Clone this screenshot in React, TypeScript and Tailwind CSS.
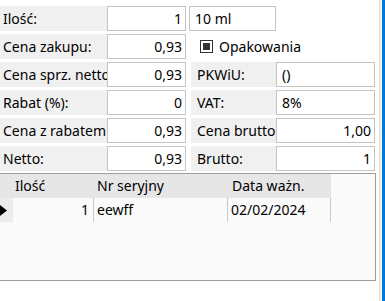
export default function App() {
  const rows = [
    { l: "Rabat (%):", v: "0", rl: "VAT:", rv: "8%", rvLeft: true },
    { l: "Cena z rabatem", v: "0,93", rl: "Cena brutto", rv: "1,00" },
    { l: "Netto:", v: "0,93", rl: "Brutto:", rv: "1" },
  ];

  return (
    <div className="flex w-[385px] h-[301px] bg-white overflow-hidden font-['Noto_Sans',sans-serif] text-[14px] text-black leading-none">
      <div className="w-[379px] flex flex-col">
        {/* Form */}
        <div className="flex flex-col gap-[3px] pt-[6px]">
          <div className="flex h-[25px]">
            <Label text="Ilość:" />
            <Field value="1" className="w-[79px]" />
            <Field value="10 ml" left className="w-[87px] ml-[3px]" />
          </div>
          <div className="flex h-[25px]">
            <Label text="Cena zakupu:" />
            <Field value="0,93" className="w-[79px]" />
            <div className="flex items-center ml-[14px] gap-[6px]">
              <div className="w-[13px] h-[13px] border border-[#333] bg-white flex items-center justify-center">
                <div className="w-[7px] h-[7px] bg-[#333]" />
              </div>
              <span>Opakowania</span>
            </div>
          </div>
          <div className="flex h-[25px]">
            <Label text="Cena sprz. netto" />
            <Field value="0,93" className="w-[79px]" />
            <RightLabel text="PKWiU:" />
            <Field value="()" left className="w-[99px]" />
          </div>
          {rows.map((r) => (
            <div key={r.l} className="flex h-[25px]">
              <Label text={r.l} />
              <Field value={r.v} className="w-[79px]" />
              <RightLabel text={r.rl} />
              <Field value={r.rv} left={r.rvLeft} className="w-[99px]" />
            </div>
          ))}
        </div>

        {/* Grid */}
        <div className="mt-[2px] w-[376px] h-[108px] border-t border-b border-r border-[#9d9d9d] bg-[#fafafa] flex flex-col">
          <div className="flex h-[24px] w-[331px] bg-[#e6e6e6] items-center">
            <div className="w-[13px]" />
            <div className="w-[81px] pl-[2px]">Ilość</div>
            <div className="w-[134px] pl-[3px]">Nr seryjny</div>
            <div className="w-[103px] pl-[4px]">Data ważn.</div>
          </div>
          <div className="flex h-[24px] w-[331px] items-center">
            <div className="w-[13px] h-full bg-[#ececec] flex items-center">
              <svg width="7" height="11" viewBox="0 0 7 11">
                <path d="M0 0 L7 5.5 L0 11 Z" fill="#000" />
              </svg>
            </div>
            <div className="w-[81px] h-full flex items-center justify-end pr-[4px] border-r border-[#c8c8c8]">1</div>
            <div className="w-[134px] h-full flex items-center pl-[3px] border-r border-[#c8c8c8]">eewff</div>
            <div className="w-[103px] h-full flex items-center pl-[3px] border-r border-[#c8c8c8]">02/02/2024</div>
          </div>
        </div>
      </div>
      <div className="w-[2px] h-full bg-[#e3e3e3]" />
      <div className="w-[1px] h-full bg-white" />
      <div className="w-[3px] h-full bg-[#0078d7]" />
    </div>
  );
}

function Label({ text }: { text: string }) {
  return (
    <div className="w-[107px] h-full bg-[#f0f0f0] flex items-center pl-[3px] overflow-hidden whitespace-nowrap">
      {text}
    </div>
  );
}

function RightLabel({ text }: { text: string }) {
  return (
    <div className="w-[85px] h-full ml-[5px] bg-[#f0f0f0] flex items-center pl-[6px] overflow-hidden whitespace-nowrap">
      {text}
    </div>
  );
}

function Field({ value, left, className }: { value: string; left?: boolean; className?: string }) {
  return (
    <div
      className={`h-full bg-white border border-[#c4c4c4] flex items-center whitespace-nowrap overflow-hidden ${
        left ? "justify-start pl-[5px]" : "justify-end pr-[3px]"
      } ${className ?? ""}`}
    >
      {value}
    </div>
  );
}
